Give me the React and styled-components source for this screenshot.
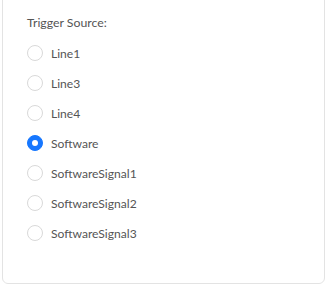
import React, { useState } from 'react';
import styled, { createGlobalStyle } from 'styled-components';

const GlobalStyle = createGlobalStyle`
  html, body {
    margin: 0;
    padding: 0;
    background: #ffffff;
    overflow: hidden;
  }
  body {
    font-family: Lato, 'Noto Sans', sans-serif;
  }
`;

const Card = styled.div`
  box-sizing: border-box;
  margin: -12px 0 0 2px;
  width: 323px;
  height: 296px;
  border: 1px solid #e3e3e3;
  border-radius: 6px;
  background: #fff;
  padding: 25px 24px 0 24px;
`;

const Title = styled.div`
  font-size: 12.3px;
  line-height: 18px;
  color: #555;
  margin-bottom: 6px;
`;

const List = styled.div`
  display: flex;
  flex-direction: column;
`;

const Option = styled.label`
  display: flex;
  align-items: center;
  height: 30px;
  gap: 8px;
  cursor: pointer;
  font-size: 12.1px;
  color: #555;
`;

const Circle = styled.span`
  box-sizing: border-box;
  width: 16px;
  height: 16px;
  border-radius: 50%;
  border: 1px solid ${(p) => (p.checked ? '#1677ff' : '#d9d9d9')};
  background: ${(p) => (p.checked ? '#1677ff' : '#fff')};
  display: flex;
  align-items: center;
  justify-content: center;
  &::after {
    content: '';
    width: 6px;
    height: 6px;
    border-radius: 50%;
    background: #fff;
    display: ${(p) => (p.checked ? 'block' : 'none')};
  }
`;

const sources = [
  'Line1',
  'Line3',
  'Line4',
  'Software',
  'SoftwareSignal1',
  'SoftwareSignal2',
  'SoftwareSignal3',
];

const App = () => {
  const [value, setValue] = useState('Software');
  return (
    <>
      <GlobalStyle />
      <Card>
        <Title>Trigger Source:</Title>
        <List>
          {sources.map((s) => (
            <Option key={s} onClick={() => setValue(s)}>
              <Circle checked={value === s} />
              {s}
            </Option>
          ))}
        </List>
      </Card>
    </>
  );
};

export default App;
